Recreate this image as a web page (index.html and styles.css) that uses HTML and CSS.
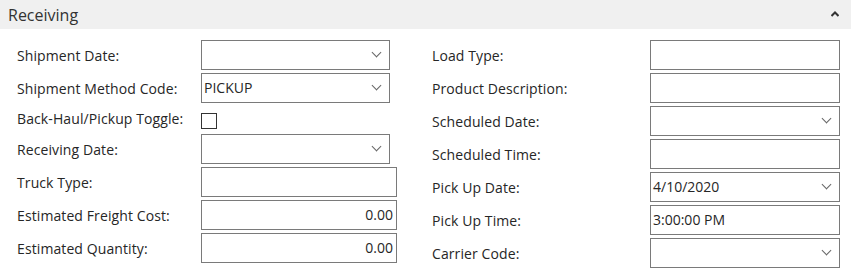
FILE: index.html
```html
<!DOCTYPE html>
<html lang="en">
<head>
  <meta charset="UTF-8" />
  <title>Receiving</title>
  <link rel="stylesheet" href="styles.css">
</head>
<body>
  <div class="section-head">
    <span class="section-title">Receiving</span>
    <svg class="collapse" width="8" height="6" viewBox="0 0 8 6"><path d="M0.5 5 L4 1.5 L7.5 5" fill="none" stroke="#333" stroke-width="2"/></svg>
  </div>

  <div class="form">
    <div class="col col-left">
      <div class="row">
        <label>Shipment Date:</label>
        <div class="field drop"><span class="val"></span><span class="chev"></span></div>
      </div>
      <div class="row">
        <label>Shipment Method Code:</label>
        <div class="field drop"><span class="val">PICKUP</span><span class="chev"></span></div>
      </div>
      <div class="row row-check">
        <label>Back-Haul/Pickup Toggle:</label>
        <div class="check"></div>
      </div>
      <div class="row">
        <label>Receiving Date:</label>
        <div class="field drop"><span class="val"></span><span class="chev"></span></div>
      </div>
      <div class="row">
        <label>Truck Type:</label>
        <div class="field text"><span class="val"></span></div>
      </div>
      <div class="row">
        <label>Estimated Freight Cost:</label>
        <div class="field text num"><span class="val">0.00</span></div>
      </div>
      <div class="row">
        <label>Estimated Quantity:</label>
        <div class="field text num"><span class="val">0.00</span></div>
      </div>
    </div>

    <div class="col col-right">
      <div class="row">
        <label>Load Type:</label>
        <div class="field text"><span class="val"></span></div>
      </div>
      <div class="row">
        <label>Product Description:</label>
        <div class="field text"><span class="val"></span></div>
      </div>
      <div class="row">
        <label>Scheduled Date:</label>
        <div class="field drop"><span class="val"></span><span class="chev"></span></div>
      </div>
      <div class="row">
        <label>Scheduled Time:</label>
        <div class="field drop"><span class="val"></span></div>
      </div>
      <div class="row">
        <label>Pick Up Date:</label>
        <div class="field drop"><span class="val">4/10/2020</span><span class="chev"></span></div>
      </div>
      <div class="row">
        <label>Pick Up Time:</label>
        <div class="field drop"><span class="val">3:00:00 PM</span></div>
      </div>
      <div class="row">
        <label>Carrier Code:</label>
        <div class="field drop"><span class="val"></span><span class="chev"></span></div>
      </div>
    </div>
  </div>
</body>
</html>
```

FILE: styles.css
```css
body {
  margin: 0;
  font-family: "Open Sans", "Noto Sans", sans-serif;
  color: #262626;
  background: #fff;
}

.section-head {
  height: 29px;
  background-color: #f0f0f0;
  display: flex;
  align-items: center;
  justify-content: space-between;
  padding: 0 12px 0 8px;
}

.section-title {
  font-size: 16px;
  color: #333;
}

.collapse {
  margin-top: -1px;
}

.form {
  display: flex;
  padding: 11px 0 0 17px;
}

.col {
  display: flex;
  flex-direction: column;
  gap: 3px;
}

.col-left {
  width: 380px;
  margin-right: 35px;
}

.col-right {
  width: 410px;
}

.row {
  display: flex;
  align-items: center;
  height: 30px;
}

.row-check {
  height: 25px;
}

label {
  font-size: 14px;
  letter-spacing: 0.1px;
  color: #262626;
}

.col-left label {
  width: 184px;
}

.col-right label {
  width: 218px;
}

.field {
  box-sizing: border-box;
  height: 30px;
  border: 1px solid #7a7a7a;
  display: flex;
  align-items: center;
  padding: 0 3px 1px 2px;
  font-size: 14px;
}

.col-left .drop {
  width: 189px;
}

.col-left .text {
  width: 196px;
}

.col-right .field {
  width: 190px;
}

.val {
  flex: 1;
}

.num .val {
  text-align: right;
}

.chev {
  width: 6px;
  height: 6px;
  border-right: 1px solid #666;
  border-bottom: 1px solid #666;
  transform: rotate(45deg);
  margin: -4px 6px 0 0;
}

.check {
  box-sizing: border-box;
  width: 16px;
  height: 16px;
  border: 1px solid #333;
  margin-top: 5px;
}
```
